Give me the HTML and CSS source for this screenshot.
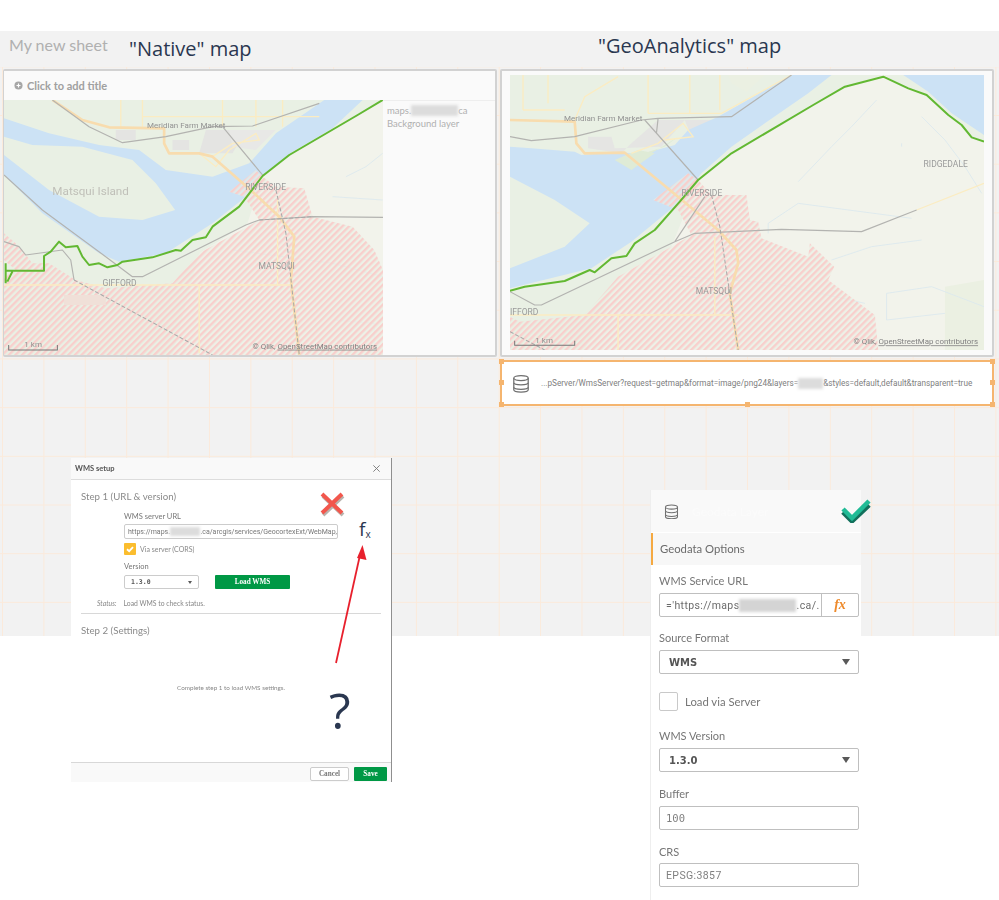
FILE: index.html
```html
<!DOCTYPE html>
<html lang="en">
<head>
<meta charset="utf-8">
<title>Native map vs GeoAnalytics map</title>
<link rel="stylesheet" href="styles.css">
</head>
<body>
<div class="topband"></div>
<main class="sheet">
  <header class="heads">
    <div class="head-left"><span class="sheet-name">My new sheet</span><span class="note-title native-title">"Native" map</span></div>
    <div class="head-right"><span class="note-title geo-title">"GeoAnalytics" map</span></div>
  </header>
  <div class="canvas">
    <div class="col-left">
      <section class="panel native">
        <div class="panel-title"><svg class="plus" viewBox="0 0 10 10"><circle cx="5" cy="5" r="4.5" fill="#a6a6a6"/><path d="M5 2.8v4.4M2.8 5h4.400" stroke="#fff" stroke-width="1.3"/></svg><span>Click to add title</span></div>
        <div class="panel-body">
          <div class="map map-native">
            <svg class="map-svg" viewBox="15 240 1136 765" preserveAspectRatio="none">
              <defs>
                <pattern id="hatch" width="14" height="14" patternUnits="userSpaceOnUse" patternTransform="rotate(-45)">
                  <rect width="14" height="14" fill="#e9f0e4" fill-opacity=".6"/>
                  <rect width="14" height="7" fill="#f8cfcc"/>
                </pattern>
              </defs>
              <rect x="15" y="240" width="1136" height="765" fill="#e9f0e4"/>
              <path d="M1151 240V1005H520L600 700L745 610L790 465L880 395L1000 330Z" fill="#f2f3eb"/>
              <path d="M350 330h60v30h-60zM520 360h50v30h-50zM620 330H740L700 400H600Z" fill="#e4e4e2"/>
              <path d="M690 330H830L770 390L700 380Z" fill="#e8e8e6"/>
              <path d="M1090 240L1000 240L975 240L830 340L750 430L640 470L500 450L420 390L300 375L150 340L15 295V350L100 375L250 380L400 420L470 490L528 570L430 600L300 590L150 510L15 405V465L130 580L300 700L360 725L500 700L640 610L740 530L790 465L880 395L1000 325Z" fill="#cce2f5"/>
              <path d="M600 1005V800M1000 900L1125 910V1005M170 820V960H250M600 915H650" fill="none" stroke="#dfe8ee" stroke-width="2"/>
              <path d="M1150 400L1100 440L1040 470M1000 530L1150 540M700 690L1000 730L1151 770" fill="none" stroke="#dbe8ee" stroke-width="2.5"/>
              <path d="M690 515L770 450L790 470L830 500L915 505L940 590L1060 620L1125 690L1151 750V1005H15V770L50 750L15 720V640L50 670L70 690L100 730L150 730L230 780L320 805L520 790L600 700L745 620L780 600L735 530Z" fill="url(#hatch)"/>
              <rect x="195" y="825" width="125" height="30" fill="#f0e0d8"/>
              <path d="M15 795H880M600 795V1000M835 540V795M365 240V320M430 240V320M670 240V320M770 240V320M850 240V320M430 290H960M600 400L650 440L690 390L770 340L780 360L700 370L640 410" fill="none" stroke="#fbecc2" stroke-width="4"/>
              <path d="M160 240L250 300L330 322L495 325L495 370L510 400L600 400L640 410L760 515L840 590L885 650L875 780L900 1005" fill="none" stroke="#f8dcae" stroke-width="8" stroke-linejoin="round"/>
              <path d="M160 240L270 320L370 368L500 350L640 320L760 318L960 250M15 465L130 570L340 725L400 770L430 770L740 615L780 600L940 590L1151 592M15 665L60 680L80 705L190 690L215 720L225 780M670 320L790 465" fill="none" stroke="#b3b3b0" stroke-width="3.5" stroke-linejoin="round"/>
              <path d="M225 780L640 1005M830 510L860 640L900 1005M780 600L940 590" fill="none" stroke="#a8a8a8" stroke-width="3" stroke-dasharray="12 6"/>
              <path d="M20 730V790M40 755L25 785M20 752H135V708L155 695L180 665L200 682L235 678L250 710L270 735L300 730L325 742L355 735L370 725L460 712L530 690L545 692L580 660L620 652L640 620L720 560L790 468L870 405L1075 285L1150 240" fill="none" stroke="#62b832" stroke-width="6" stroke-linejoin="round"/>
              <text class="lbl lbl-big" x="160" y="525">Matsqui Island</text>
              <text class="lbl" x="444" y="324">Meridian Farm Market</text>
              <text class="lbl lbl-caps" x="738" y="509">RIVERSIDE</text>
              <text class="lbl lbl-caps" x="778" y="746">MATSQUI</text>
              <text class="lbl lbl-caps" x="310" y="797">GIFFORD</text>
              <path d="M29 975V990H175V975" fill="none" stroke="#777" stroke-width="3"/>
              <text class="lbl" x="76" y="981">1 km</text>
              <text class="lbl lbl-attr" x="760" y="986">© Qlik, <tspan text-decoration="underline">OpenStreetMap contributors</tspan></text>
            </svg>
          </div>
          <aside class="legend"><div class="legend-top"><span>maps.</span><span class="redact redact-legend"></span><span>ca</span></div><div>Background layer</div></aside>
        </div>
      </section>
    </div>
    <div class="col-right">
      <section class="panel geo">
        <svg class="map-svg" viewBox="36 165 1421 825" preserveAspectRatio="none">
          <defs>
            <pattern id="hatch2" width="14" height="14" patternUnits="userSpaceOnUse" patternTransform="rotate(-45)">
              <rect width="14" height="14" fill="#e9f0e4" fill-opacity=".6"/>
              <rect width="14" height="7" fill="#f8cfcc"/>
            </pattern>
          </defs>
          <rect x="36" y="165" width="1421" height="825" fill="#e9f0e4"/>
          <path d="M1155 165L1230 205L1285 225L1350 285L1390 315L1420 352L1457 365V990H260L360 770L520 680L600 480L700 400L945 255L1040 200Z" fill="#f2f3eb"/>
          <path d="M690 165H800L745 215L700 190ZM1340 800L1457 780V990H1340Z" fill="#ebf0e2"/>
          <path d="M480 300H680L580 350L560 300L490 380L350 385L340 350L270 350L270 385L370 400L400 370Z" fill="#e5e5e3"/>
          <path d="M1000 165L880 165L660 290L570 330L530 375L420 405L370 395L250 405L230 395L100 385L36 380V470L170 540L275 610L200 680L36 745V805L280 745L400 665L540 550L610 460L700 380L800 310L930 220Z" fill="#cce2f5"/>
          <path d="M420 405L500 380L540 350L460 400Z M350 420L420 390L470 400L400 450Z" fill="#dfebd6"/>
          <path d="M1215 165L1290 215L1360 280L1457 345V165Z" fill="#cce2f5"/>
          <path d="M900 485L1000 380L1060 320L1135 240M1270 290L1340 360L1400 440L1450 520M810 640V610L900 550L1240 595M1000 720L1120 680L1270 660M1165 820L1300 800L1457 860M1165 820V900L1340 880M430 760L830 790L1100 850M510 820V900M1210 370V380" fill="none" stroke="#dbe8ee" stroke-width="2.5"/>
          <path d="M465 540L570 460L600 480L640 525L745 525L755 600L780 605L790 655L930 710L935 670L1008 740L990 780L1130 885L1140 990H36V890L65 905L260 885L360 770L520 680L580 645L540 570Z" fill="url(#hatch2)"/>
          <path d="M36 885H720M360 885V990M650 650V885M150 165V250M75 165V270M450 165V280M575 165V280M665 165V270M75 270H200M450 280H670L880 165M230 300L260 230L360 170M500 360L585 350L555 310L480 370L400 400M1255 570L1457 490" fill="none" stroke="#fbecc2" stroke-width="4"/>
          <path d="M36 300L230 305L235 370L260 400L380 398L660 630L715 690L720 730L695 820L720 990" fill="none" stroke="#f8dcae" stroke-width="8" stroke-linejoin="round"/>
          <path d="M36 350L100 362L230 350L430 300L480 295L700 290L880 165M440 300L600 480M36 815L110 855L130 855L530 665L590 640L850 628L1090 635L1255 570M480 295L475 340M530 665L620 530" fill="none" stroke="#b3b3b0" stroke-width="3.5" stroke-linejoin="round"/>
          <path d="M640 525L665 620L720 990M36 935L140 990" fill="none" stroke="#a8a8a8" stroke-width="3" stroke-dasharray="12 6"/>
          <path d="M36 812L80 800L200 783L275 750L290 757L340 715L385 708L410 670L470 630L545 545L600 480L700 400L945 255L1040 200L1155 170L1230 205L1285 225L1350 285L1390 315L1420 352L1457 365" fill="none" stroke="#62b832" stroke-width="6" stroke-linejoin="round"/>
          <text class="lbl" x="198" y="304">Meridian Farm Market</text>
          <text class="lbl lbl-caps" x="1276" y="440">RIDGEDALE</text>
          <text class="lbl lbl-caps" x="550" y="529">RIVERSIDE</text>
          <text class="lbl lbl-caps" x="593" y="823">MATSQUI</text>
          <text class="lbl lbl-caps" x="36" y="884">IFFORD</text>
          <path d="M50 962V976H230V962" fill="none" stroke="#777" stroke-width="3"/>
          <text class="lbl" x="112" y="968">1 km</text>
          <text class="lbl lbl-attr" x="1066" y="973">© Qlik, <tspan text-decoration="underline">OpenStreetMap contributors</tspan></text>
        </svg>
      </section>
      <section class="urlbar">
        <svg class="db" viewBox="0 0 20 20"><g fill="#fff" stroke="#6f6f6f" stroke-width="1.4"><path d="M2 14v3c0 1.5 3.6 2.6 8 2.6s8-1.1 8-2.6v-3"/><path d="M2 9v5c0 1.5 3.6 2.6 8 2.6s8-1.1 8-2.6V9"/><path d="M2 4v5c0 1.5 3.6 2.6 8 2.6s8-1.1 8-2.6V4"/><ellipse cx="10" cy="4" rx="8" ry="2.8"/></g></svg>
        <span class="urltext">...pServer/WmsServer?request=getmap&amp;format=image/png24&amp;layers=<span class="redact redact-url"></span>&amp;styles=default,default&amp;transparent=true</span>
        <i class="handle h-tl"></i><i class="handle h-tr"></i><i class="handle h-bl"></i><i class="handle h-br"></i><i class="handle h-bc"></i><i class="handle h-lc"></i><i class="handle h-rc"></i>
      </section>
    </div>
  </div>
</main>

<section class="dialog">
  <div class="dlg-head"><span>WMS setup</span><svg class="dlg-x" viewBox="0 0 10 10"><path d="M1.5 1.5l7 7M8.5 1.5l-7 7" stroke="#777" stroke-width="1"/></svg></div>
  <div class="dlg-body">
    <h2 class="step">Step 1 (URL &amp; version)</h2>
    <div class="dlg-form">
      <div class="dlg-label">WMS server URL</div>
      <div class="dlg-input"><span>https://maps.</span><span class="redact redact-dlg"></span><span>.ca/arcgis/services/GeocortexExt/WebMap,</span></div>
      <div class="dlg-check"><span class="yellow-box"><svg viewBox="0 0 10 10"><path d="M2.5 5.2l1.8 1.6 3.2-3.4" fill="none" stroke="#fff" stroke-width="1.5"/></svg></span><span>Via server (CORS)</span></div>
      <div class="dlg-label dlg-version">Version</div>
      <div class="dlg-row"><div class="dlg-select"><span>1.3.0</span><i class="caret caret-sm"></i></div><div class="btn-green btn-load">Load WMS</div></div>
    </div>
    <div class="status"><em>Status:</em><span>Load WMS to check status.</span></div>
    <hr class="dlg-hr">
    <h2 class="step">Step 2 (Settings)</h2>
    <p class="dlg-empty">Complete step 1 to load WMS settings.</p>
  </div>
  <div class="dlg-foot"><div class="btn-cancel">Cancel</div><div class="btn-green btn-save">Save</div></div>
</section>

<aside class="config">
  <div class="cfg-head"><svg class="db-small" viewBox="0 0 20 20"><g fill="#f9f9f9" stroke="#6f6f6f" stroke-width="1.4"><path d="M2 14v3c0 1.5 3.6 2.6 8 2.6s8-1.1 8-2.6v-3"/><path d="M2 9v5c0 1.5 3.6 2.6 8 2.6s8-1.1 8-2.6V9"/><path d="M2 4v5c0 1.5 3.6 2.6 8 2.6s8-1.1 8-2.6V4"/><ellipse cx="10" cy="4" rx="8" ry="2.8"/></g></svg><span class="cfg-ghost">Geodata Layer</span></div>
  <div class="cfg-tab">Geodata Options</div>
  <div class="cfg-body">
    <label class="cfg-label">WMS Service URL</label>
    <div class="cfg-field cfg-url"><div class="cfg-url-text"><span>='https://maps</span><span class="redact redact-cfg"></span><span>.ca/.</span></div><div class="cfg-fx">fx</div></div>
    <label class="cfg-label">Source Format</label>
    <div class="cfg-field cfg-select"><b>WMS</b><i class="caret"></i></div>
    <div class="cfg-check"><span class="cfg-box"></span><span>Load via Server</span></div>
    <label class="cfg-label">WMS Version</label>
    <div class="cfg-field cfg-select"><b>1.3.0</b><i class="caret"></i></div>
    <label class="cfg-label">Buffer</label>
    <div class="cfg-field cfg-plain">100</div>
    <label class="cfg-label cfg-crs">CRS</label>
    <div class="cfg-field cfg-plain cfg-epsg">EPSG:3857</div>
  </div>
</aside>

<svg class="mark mark-x" viewBox="0 0 30 28"><path d="M5 4l20 19M25 4L5 23" stroke="#b9b3ad" stroke-width="4" transform="translate(1 2)"/><path d="M5 4l20 19M25 4L5 23" stroke="#f2574d" stroke-width="4"/></svg>
<div class="mark mark-fx">f<sub>x</sub></div>
<svg class="mark mark-arrow" viewBox="0 0 40 124"><path d="M4 122L28 14" stroke="#e8202d" stroke-width="1.800" fill="none"/><path d="M30.500 4L34.500 19L25 17Z" fill="#e8202d"/></svg>
<div class="mark mark-q">?</div>
<svg class="mark mark-check" viewBox="0 0 32 26"><path d="M3 13l9 9L29 6" stroke="#12705c" stroke-width="5" fill="none" transform="translate(0 2)"/><path d="M3 12l9 9L29 4" stroke="#20bb96" stroke-width="4.500" fill="none"/></svg>
</body>
</html>
```
FILE: styles.css
```css
* { box-sizing: border-box; }
html, body { margin: 0; padding: 0; }
body { position: relative; width: 999px; height: 900px; overflow: hidden; background: #fff; font-family: "Noto Sans", "Open Sans", sans-serif; color: #595959; }

.topband { height: 31px; background: #fff; }
.sheet { height: 605px; background: #f2f2f2; display: flex; flex-direction: column; }
.heads { height: 36px; display: flex; flex: none; }
.head-left { width: 500px; display: flex; align-items: flex-start; padding: 4px 0 0 9px; }
.head-right { flex: 1; padding: 1px 0 0 98px; }
.sheet-name { font: 16px/20px "Lato", sans-serif; color: #b0b0b0; width: 120px; }
.note-title { font-family: "Open Sans", sans-serif; font-size: 20px; line-height: 28px; color: #2a3750; white-space: nowrap; }

.canvas { flex: 1; display: flex; padding: 2px 5px 0 3px; gap: 3px;
  background-color: #f2f2f2;
  background-image: linear-gradient(to right, #fbeadb 1px, transparent 1px), linear-gradient(to bottom, #fbeadb 1px, transparent 1px);
  background-size: 41.4px 48.7px;
  background-position: 2px 48px; }
.col-left { width: 494px; }
.col-right { flex: 1; display: flex; flex-direction: column; gap: 3px; }

.panel { border: 2px solid #d2d2d2; background: #fafafa; height: 288px; border-radius: 2px; }
.native { display: flex; flex-direction: column; border-left-width: 1px; }
.panel-title { height: 29px; flex: none; display: flex; align-items: center; gap: 4px; padding: 0 0 1px 10px; font: bold 11px "Lato", sans-serif; color: #a0a0a0; }
.plus { width: 9px; height: 9px; }
.panel-body { flex: 1; display: flex; min-height: 0; }
.map { width: 379px; flex: none; }
.map-native { height: 100%; }
.map-svg { display: block; width: 100%; height: 100%; filter: blur(.35px); }
.legend { flex: 1; padding: 4px 0 0 4px; border-top: 1px solid #eee; font: 9.500px/12.500px "Lato", sans-serif; color: #b0b0b0; }
.legend-top { display: flex; }
.lbl { font: 24px "Roboto", sans-serif; fill: #929292; }
.lbl-caps { font-size: 25.500px; fill: #9a9a9a; }
.lbl-attr { font-size: 23.700px; fill: #808080; }
.lbl-big { font-size: 35px; fill: #c0c0b9; }

.geo { padding: 4px 8px 5px 8px; }
.urlbar { position: relative; height: 46px; border: 2px solid #f5b56f; background: #fff; display: flex; align-items: center; padding-left: 10px; }
.db { width: 18px; height: 19px; flex: none; }
.urltext { margin-left: 11px; font: 8.200px "Roboto", sans-serif; color: #808080; white-space: nowrap; display: flex; align-items: center; }
.redact { display: inline-block; background: #dcdcdc; filter: blur(1.5px); }
.redact-legend { width: 47px; height: 11px; }
.redact-url { width: 25px; height: 11px; }
.redact-dlg { width: 33px; height: 9px; }
.redact-cfg { width: 57px; height: 13px; background: #d4d4d4; }
.handle { position: absolute; width: 5px; height: 5px; background: #f5b56f; }
.h-tl { left: -3px; top: -3px; } .h-tr { right: -3px; top: -3px; }
.h-bl { left: -3px; bottom: -3px; } .h-br { right: -3px; bottom: -3px; }
.h-bc { left: 243px; bottom: -3px; } .h-lc { left: -3px; top: 18px; } .h-rc { right: -3px; top: 18px; }

.dialog { position: absolute; left: 71px; top: 458px; width: 321px; height: 324px; background: #fff; border-right: 1px solid #8f8f8f; display: flex; flex-direction: column; font-family: "Lato", sans-serif; filter: blur(.3px); }
.dlg-head { height: 22px; flex: none; display: flex; align-items: center; justify-content: space-between; padding: 0 10px 0 4px; background: #f9f9f9; border-bottom: 1px solid #ddd; font-size: 7.500px; font-weight: bold; color: #555; }
.dlg-x { width: 9px; height: 9px; }
.dlg-body { flex: 1; padding: 9px 10px 0 10px; background: #fff; }
.step { margin: 0; font-size: 9.700px; line-height: 14px; font-weight: 400; color: #8a8a8a; }
.dlg-form { margin: 8px 0 0 43px; }
.dlg-label { font-size: 7.500px; line-height: 11px; color: #777; }
.dlg-input { margin-top: 2px; width: 214px; height: 15px; border: 1px solid #ccc; border-radius: 2px; padding-left: 3px; display: flex; align-items: center; font: 7px "Roboto", sans-serif; color: #777; white-space: nowrap; overflow: hidden; }
.dlg-check { margin-top: 4px; height: 12px; display: flex; align-items: center; gap: 4px; font-size: 7px; color: #888; }
.yellow-box { width: 12px; height: 12px; background: #fbbd2e; border-radius: 1px; display: flex; }
.yellow-box svg { width: 12px; height: 12px; }
.dlg-version { margin-top: 6px; }
.dlg-row { margin-top: 3px; display: flex; gap: 16px; }
.dlg-select { width: 75px; height: 14px; border: 1px solid #ccc; border-radius: 2px; display: flex; align-items: center; justify-content: space-between; padding: 0 6px; font: bold 6.500px "DejaVu Sans Mono", monospace; color: #555; }
.caret { width: 0; height: 0; border-left: 4px solid transparent; border-right: 4px solid transparent; border-top: 6px solid #595959; }
.caret-sm { border-left-width: 2.500px; border-right-width: 2.500px; border-top-width: 3.500px; }
.btn-green { background: #009845; color: #fff; font: bold 7.200px "Liberation Serif", serif; display: flex; align-items: center; justify-content: center; border-radius: 1px; }
.btn-load { width: 75px; height: 14px; }
.status { margin: 9px 0 0 16px; display: flex; gap: 7px; font-size: 6.800px; line-height: 10px; color: #888; }
.dlg-hr { margin: 5px 0 0; border: 0; border-top: 1px solid #d8d8d8; width: 300px; }
.dlg-hr + .step { margin-top: 9px; }
.dlg-empty { margin: 46px 0 0 96px; font-size: 6.300px; line-height: 10px; color: #888; }
.dlg-foot { height: 20px; flex: none; display: flex; justify-content: flex-end; gap: 5px; padding: 4px 4px 0 0; background: #f9f9f9; border-top: 1px solid #d8d8d8; align-items: flex-start; }
.btn-cancel { width: 39px; height: 14px; border: 1px solid #ccc; border-radius: 2px; background: #fff; font: bold 7.200px "Liberation Serif", serif; color: #777; display: flex; align-items: center; justify-content: center; }
.btn-save { width: 33px; height: 14px; }

.config { position: absolute; left: 650px; top: 490px; width: 211px; height: 410px; background: #fff; border-left: 1px solid #eee; font-family: "Lato", sans-serif; color: #767676; filter: blur(.25px); }
.cfg-head { height: 42px; background: #f9f9f9; display: flex; align-items: center; padding-left: 13px; gap: 13px; }
.db-small { width: 15px; height: 15px; }
.cfg-ghost { font-size: 12px; color: #fbfbfb; }
.cfg-tab { margin-top: 1px; height: 32px; background: #f7f7f7; border-left: 2px solid #f5a941; padding: 0 0 2px 7px; display: flex; align-items: center; font-size: 11.300px; color: #6b6b6b; }
.cfg-body { padding: 8px 2px 0 8px; }
.cfg-label { display: block; font-size: 11px; line-height: 15px; margin-bottom: 5px; }
.cfg-field { height: 24px; border: 1px solid #bfbfbf; border-radius: 2px; display: flex; align-items: center; margin-bottom: 14px; font-size: 11px; background: #fff; }
.cfg-url { margin-bottom: 13px; }
.cfg-url-text { width: 162px; flex: none; height: 100%; padding-left: 6px; display: flex; align-items: center; font: 10.500px "Roboto", sans-serif; color: #6b6b6b; letter-spacing: .4px; white-space: nowrap; overflow: hidden; border-right: 1px solid #bfbfbf; }
.cfg-fx { flex: 1; text-align: center; font: italic bold 14px "Liberation Serif", serif; color: #ee8a2b; }
.cfg-select { justify-content: space-between; padding: 0 8px 0 9px; }
.cfg-select b { font: bold 10px "DejaVu Sans", sans-serif; color: #555; }
.cfg-check { height: 19px; margin: 18px 0 17px; display: flex; align-items: center; gap: 7px; font-size: 11.300px; }
.cfg-box { width: 19px; height: 19px; border: 1px solid #c9c9c9; border-radius: 2px; }
.cfg-plain { padding-left: 6px; font: 10.500px "DejaVu Sans Mono", monospace; color: #808080; }
.cfg-epsg { font: 10.500px "Roboto", sans-serif; letter-spacing: .4px; }
.cfg-crs { margin-bottom: 4px; }

.mark { position: absolute; }
.mark-x { left: 317px; top: 490px; width: 30px; height: 28px; }
.mark-fx { left: 359px; top: 517px; font: 19px/24px "Open Sans", sans-serif; color: #2a3750; }
.mark-fx sub { font-size: 10px; line-height: 0; vertical-align: -2px; }
.mark-arrow { left: 332px; top: 541px; width: 40px; height: 124px; }
.mark-q { left: 329px; top: 675px; font: 500 50px/70px "Open Sans", sans-serif; color: #2a3750; }
.mark-check { left: 840px; top: 497px; width: 32px; height: 26px; }
```
